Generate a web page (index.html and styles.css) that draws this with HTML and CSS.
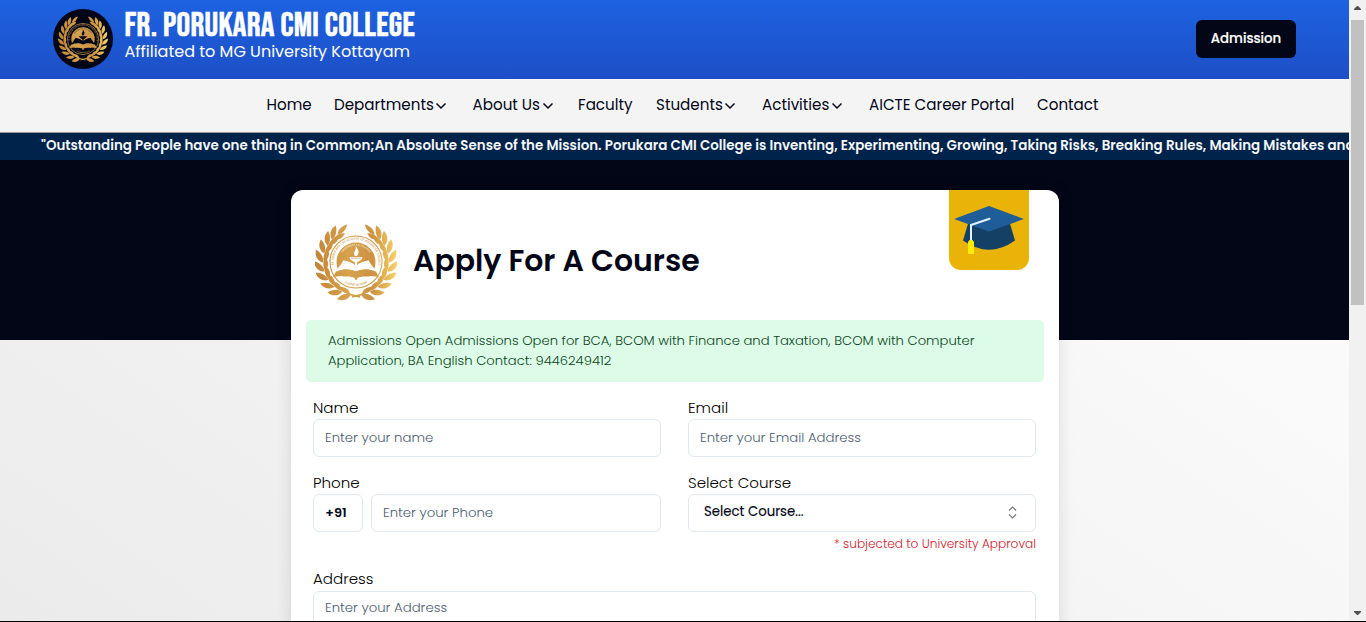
FILE: index.html
```html
<!DOCTYPE html>
<html lang="en">
<head>
<meta charset="utf-8">
<title>Fr. Porukara CMI College</title>
<link rel="stylesheet" href="styles.css">
</head>
<body>
<svg class="defs" aria-hidden="true">
  <defs>
    <linearGradient id="gold" gradientUnits="userSpaceOnUse" x1="-41" y1="-6" x2="41" y2="-6">
      <stop offset="0" stop-color="#c28438"/>
      <stop offset=".4" stop-color="#d6a24c"/>
      <stop offset=".7" stop-color="#cc9242"/>
      <stop offset="1" stop-color="#f8d368"/>
    </linearGradient>
    <g id="leaves">
      <path d="M32.500 4C37.500 3.500 42 -1 41 -8C35.500 -5.500 32.500 -1 32.500 4Z"/>
      <path d="M32 3C27.500 0 26.500 -4.500 29 -10C33 -6 33.500 -1 32 3Z"/>
    </g>
    <g id="branch">
      <use href="#leaves" transform="rotate(74)"/>
      <use href="#leaves" transform="rotate(58)"/>
      <use href="#leaves" transform="rotate(42)"/>
      <use href="#leaves" transform="rotate(26)"/>
      <use href="#leaves" transform="rotate(10)"/>
      <use href="#leaves" transform="rotate(-6)"/>
      <use href="#leaves" transform="rotate(-22)"/>
      <use href="#leaves" transform="rotate(-37)"/>
      <use href="#leaves" transform="rotate(-50)"/>
      <path d="M33 3C31 -1 33 -7 37 -10.500C38.500 -5 37 0 33 3Z" transform="rotate(-61)"/>
      <path d="M-4 34C2 32.500 7 31.500 10 29L10.500 30.500C7 33.500 2 34.500 -4 35.700Z"/>
    </g>
    <mask id="laurel" maskUnits="userSpaceOnUse" x="-45" y="-45" width="90" height="90">
      <g fill="#fff">
        <use href="#branch"/>
        <use href="#branch" transform="scale(-1 1)"/>
      </g>
    </mask>
    <path id="arc-outer" d="M-20.500 9A22.400 22.400 0 1 1 20.500 9"/>
    <path id="arc-inner" d="M-14 8A16.200 16.200 0 1 1 14 8"/>
    <path id="arc-bottom" d="M-18 15.500A23.800 23.800 0 0 0 18 15.500"/>
    <g id="emblem">
      <rect x="-45" y="-45" width="90" height="90" fill="url(#gold)" mask="url(#laurel)"/>
      <circle class="disc" r="26"/>
      <circle r="26" fill="none" stroke="url(#gold)" stroke-width="1.100"/>
      <circle r="19.500" fill="url(#gold)"/>
      <path class="paper" d="M-20 9.500C-17 4 -14 2 -13 -1.500C-8 -1 -3 .5 0 4C3 .5 8 -1 13 -1.500C14 2 17 4 20 9.500C12 6.500 5 7 0 9.500C-5 7 -12 6.500 -20 9.500Z"/>
      <path d="M-23 15L-20 9.500C-12 6.500 -5 7 0 9.500C5 7 12 6.500 20 9.500L23 15C14 13.500 6 14 1 15.500V17.500H-1V15.500C-6 14 -14 13.500 -23 15Z" fill="url(#gold)"/>
      <path class="paper" d="M-17.500 15.500C-10 14 -5 14.500 -1.200 16V17.800H1.200V16C5 14.500 10 14 17.500 15.500Q9 22 0 22T-17.500 15.500Z"/>
      <path class="paper" d="M-6.500 -5H6.500C6 -2 3 -.5 1.200 0V4H-1.200V0C-3 -.5 -6 -2 -6.500 -5ZM-1 -6C-4 -9.500 1 -11.500 -.5 -16C3 -12.500 3.500 -8.500 1 -6Z"/>
      <path d="M-5 -3.800H5" stroke="#c58a3b" stroke-width=".6"/>
      <g class="ring-text" fill="url(#gold)">
        <text font-size="3"><textPath href="#arc-outer" startOffset="50%" text-anchor="middle">FR. PORUKARA CMI COLLEGE OF ADVANCED STUDIES</textPath></text>
        <text font-size="3"><textPath href="#arc-bottom" startOffset="50%" text-anchor="middle">CHAMPAKULAM</textPath></text>
      </g>
      <text class="ring-text faint" font-size="2.700"><textPath href="#arc-inner" startOffset="50%" text-anchor="middle">ENGENDERS EXCELLENCE</textPath></text>
    </g>
    <symbol id="chevron" viewBox="0 0 12 8"><path d="M1.500 1.500L6 6L10.500 1.500" fill="none" stroke="currentColor" stroke-width="1.500"/></symbol>
  </defs>
</svg>

<div class="page">
  <header class="topbar">
    <span class="badge-logo"><svg viewBox="-41 -40 82 80" width="50" height="48"><use href="#emblem"/></svg></span>
    <div class="brand">
      <div class="brand-name">FR. PORUKARA CMI COLLEGE</div>
      <div class="brand-sub">Affiliated to MG University Kottayam</div>
    </div>
    <a class="admission">Admission</a>
  </header>

  <nav class="nav">
    <a>Home</a>
    <a>Departments<svg><use href="#chevron"/></svg></a>
    <a>About Us<svg><use href="#chevron"/></svg></a>
    <a>Faculty</a>
    <a>Students<svg><use href="#chevron"/></svg></a>
    <a>Activities<svg><use href="#chevron"/></svg></a>
    <a>AICTE Career Portal</a>
    <a>Contact</a>
  </nav>

  <div class="ticker">"Outstanding People have one thing in Common;An Absolute Sense of the Mission. Porukara CMI College is Inventing, Experimenting, Growing, Taking Risks, Breaking Rules, Making Mistakes and</div>

  <main class="main">
    <section class="card">
      <div class="card-head">
        <svg class="crest" viewBox="-41 -40 82 80" width="82" height="80"><use href="#emblem"/></svg>
        <h1>Apply For A Course</h1>
        <div class="cap">
          <svg viewBox="0 0 80 80" width="80" height="80">
            <path d="M19.500 32L14 50.500Q40 69 66 50.500L60.500 32Z" fill="#144066"/>
            <path d="M5 29L40 16L75 29L40 41.500Z" fill="#1f5d99"/>
            <path d="M40.500 28.800L22 35V51" fill="none" stroke="#e3f3fb" stroke-width="2" stroke-linecap="round"/>
            <path d="M20.500 50H23.500L25 52V64H19V52Z" fill="#ffec00"/>
          </svg>
        </div>
      </div>

      <div class="notice">Admissions Open Admissions Open for BCA, BCOM with Finance and Taxation, BCOM with Computer Application, BA English Contact: 9446249412</div>

      <div class="form">
        <div class="field"><label>Name</label><div class="input">Enter your name</div></div>
        <div class="field"><label>Email</label><div class="input">Enter your Email Address</div></div>
        <div class="field"><label>Phone</label>
          <div class="phone"><div class="input code">+91</div><div class="input">Enter your Phone</div></div>
        </div>
        <div class="field"><label>Select Course</label>
          <div class="input select"><span>Select Course...</span>
            <svg width="9" height="13" viewBox="0 0 9 13"><path d="M1 4.500L4.500 1L8 4.500M1 8.500L4.500 12L8 8.500" fill="none" stroke="#777" stroke-width="1.200"/></svg>
          </div>
          <p class="note">* subjected to University Approval</p>
        </div>
        <div class="field wide"><label>Address</label><div class="input area">Enter your Address</div></div>
      </div>
    </section>
  </main>
</div>

<div class="scrollbar">
  <svg width="7" height="4" viewBox="0 0 7 4"><path d="M0 4V3L3 0H4L7 3V4Z" fill="#505050"/></svg>
  <div class="thumb"></div>
  <svg class="down" width="7" height="4" viewBox="0 0 7 4"><path d="M0 0V1L3 4H4L7 1V0Z" fill="#505050"/></svg>
</div>
</body>
</html>
```

FILE: styles.css
```css
* { box-sizing: border-box; }
body {
  margin: 0;
  height: 622px;
  display: flex;
  overflow: hidden;
  border-bottom: 1px solid #000;
  font-family: Poppins, Inter, sans-serif;
  color: #020617;
  white-space: nowrap;
}
.defs { position: absolute; width: 0; height: 0; }
.page { width: 1349px; height: 621px; display: flex; flex-direction: column; overflow: hidden; }

.topbar {
  height: 79px;
  flex: none;
  display: flex;
  align-items: center;
  padding: 0 53px 2px;
  background: linear-gradient(#1d62e1, #1d4fc6);
  color: #fff;
}
.badge-logo {
  --paper: #020617;
  width: 60px; height: 60px;
  border-radius: 50%;
  background: #020617;
  display: flex; align-items: center; justify-content: center;
}
.crest { --paper: #fff; }
.paper, .disc { fill: var(--paper); }
.faint { fill: var(--paper); opacity: .7; }
.ring-text { font-family: Poppins, sans-serif; font-weight: 500; }
.brand { align-self: flex-start; margin-left: 11.5px; padding-top: 12px; }
.brand-name {
  height: 28px;
  line-height: 28px;
  font-family: "Bebas Neue", Poppins, sans-serif;
  font-size: 34px;
  letter-spacing: .3px;
  -webkit-text-stroke: .6px #fff;
}
.brand-sub { height: 24px; line-height: 24px; font-size: 16px; }
.admission {
  margin-left: auto;
  width: 100px; height: 38px;
  line-height: 37px;
  text-align: center;
  border-radius: 6px;
  background: #020617;
  font-size: 13.300px; font-weight: 500;
  -webkit-text-stroke: .2px #fff;
}

.nav {
  height: 54px;
  flex: none;
  display: grid;
  grid-template-columns: 67.500px 138.500px 105.500px 78px 106px 107px 168px 62px;
  padding-left: 266.500px;
  background: #f4f4f4;
  border-bottom: 1px solid #9a9a9a;
  font-size: 15.15px;
  line-height: 51px;
}
.nav svg { width: 12px; height: 8px; margin-left: 1.5px; }

.ticker {
  height: 27px;
  flex: none;
  overflow: hidden;
  padding-left: 41px;
  background: #00234b;
  color: #f4f6f8;
  font-size: 13.450px; font-weight: 600;
  line-height: 25px;
}

.main {
  flex: 1;
  min-height: 0;
  padding: 30px 0 0 291px;
  background: linear-gradient(#020617, #020617) 0 0 / 100% 180px no-repeat, linear-gradient(35deg, #ebebeb, #fdfdfd);
}
.card {
  width: 768px;
  height: 700px;
  background: #fff;
  border-radius: 12px;
  box-shadow: 0 0 16px rgba(0, 0, 0, .12);
}
.card-head { height: 130px; display: flex; align-items: center; padding: 14px 30px 0 24px; }
.card-head h1 { margin: 0 0 0 16px; font-size: 29.900px; font-weight: 600; line-height: 40px; padding-bottom: 2px; }
.cap {
  align-self: flex-start;
  margin: -14px 0 0 auto;
  width: 80px; height: 80px;
  border-radius: 0 0 12px 12px;
  background: #eab308;
}
.cap svg { display: block; }

.notice {
  margin: 0 15px;
  height: 62px;
  padding: 11px 22px;
  border-radius: 5px;
  background: #dcfce7;
  color: #0c4524;
  font-size: 13.160px;
  font-weight: 300;
  line-height: 20px;
  white-space: normal;
}

.form {
  padding: 14px 22px 0;
  display: grid;
  grid-template-columns: 348px 348px;
  gap: 14px 27px;
  font-weight: 300;
}
.field label { display: block; height: 23px; line-height: 24px; font-size: 15.100px; color: #000; }
.input {
  height: 38px;
  border: 1px solid #e2e8f0;
  border-radius: 6px;
  padding: 0 11px;
  line-height: 35px;
  font-size: 13.270px;
  color: #4b5b72;
}
.phone { display: grid; grid-template-columns: 50px 290px; gap: 8px; }
.code { padding: 0 4px 0 0; text-align: center; font-weight: 600; font-size: 12.900px; color: #020617; }
.select {
  display: flex; align-items: center; justify-content: space-between;
  padding: 0 18px 0 15px;
  color: #020617; font-weight: 400;
  -webkit-text-stroke: .15px #020617;
}
.select span { padding-bottom: 3px; }
.select svg { margin-bottom: 1px; }
.note { margin: 3px 0 0; height: 18px; line-height: 18px; text-align: right; font-size: 12.130px; color: #cf1a2e; }
.wide { grid-column: 1 / 3; }
.wide label { height: 24px; }
.area { height: 80px; line-height: 31px; }

.scrollbar { width: 17px; height: 621px; background: #f1f1f1; display: flex; flex-direction: column; align-items: center; padding: 6px 0; }
.thumb { width: 13px; height: 285px; margin-top: 10px; background: #c1c1c1; }
.down { margin-top: auto; }
```
